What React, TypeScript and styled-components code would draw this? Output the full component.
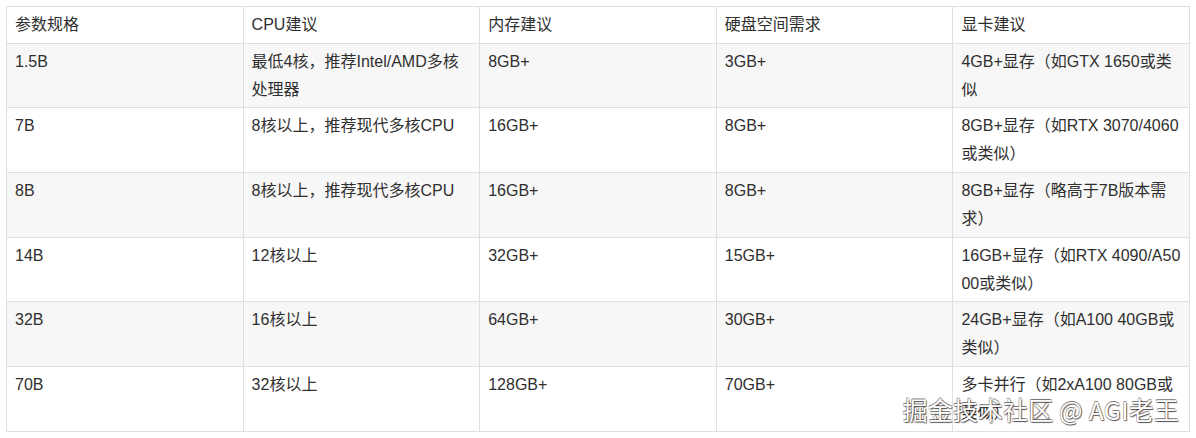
import React from "react";
import styled, { createGlobalStyle } from "styled-components";

const Global = createGlobalStyle`
  html, body { margin: 0; padding: 0; background: #fff; }
  body { font-family: "Liberation Sans", "Noto Sans CJK SC", sans-serif; }
`;

const Page = styled.div`
  position: relative;
  width: 1196px;
  height: 438px;
  overflow: hidden;
  padding: 6px 0 0 6px;
  box-sizing: border-box;
`;

const Table = styled.table`
  width: 1184px;
  table-layout: fixed;
  border-collapse: collapse;
  font-size: 16px;
  line-height: 28px;
  color: #2f2f2f;
`;

const Row = styled.tr<{ $shaded?: boolean }>`
  background: ${(p) => (p.$shaded ? "#f7f7f7" : "#fff")};
`;

const HeadCell = styled.th`
  border: 1px solid #dfdfdf;
  padding: 3.85px 8px;
  text-align: left;
  font-weight: normal;
  vertical-align: top;
`;

const Cell = styled.td`
  border: 1px solid #dfdfdf;
  padding: 3.85px 8px;
  text-align: left;
  vertical-align: top;
  word-break: break-all;
`;

const Watermark = styled.div`
  position: absolute;
  right: 17px;
  top: 394px;
  font-family: "Noto Sans CJK SC", sans-serif;
  font-size: 24.8px;
  line-height: 30px;
  color: #fff;
  letter-spacing: 0.3px;
  text-shadow: 1px 1px 1px rgba(0, 0, 0, 0.6), -0.6px -0.6px 0 rgba(0, 0, 0, 0.4),
    0.6px -0.6px 0 rgba(0, 0, 0, 0.25), -0.6px 0.6px 0 rgba(0, 0, 0, 0.25);
  white-space: nowrap;
  pointer-events: none;
`;

const headers = ["参数规格", "CPU建议", "内存建议", "硬盘空间需求", "显卡建议"];

const rows: string[][] = [
  ["1.5B", "最低4核，推荐Intel/AMD多核处理器", "8GB+", "3GB+", "4GB+显存（如GTX 1650或类似"],
  ["7B", "8核以上，推荐现代多核CPU", "16GB+", "8GB+", "8GB+显存（如RTX 3070/4060或类似）"],
  ["8B", "8核以上，推荐现代多核CPU", "16GB+", "8GB+", "8GB+显存（略高于7B版本需求）"],
  ["14B", "12核以上", "32GB+", "15GB+", "16GB+显存（如RTX 4090/A5000或类似）"],
  ["32B", "16核以上", "64GB+", "30GB+", "24GB+显存（如A100 40GB或类似）"],
  ["70B", "32核以上", "128GB+", "70GB+", "多卡并行（如2xA100 80GB或类似）"],
];

export default function App() {
  return (
    <>
      <Global />
      <Page>
        <Table>
          <thead>
            <Row>
              {headers.map((h) => (
                <HeadCell key={h}>{h}</HeadCell>
              ))}
            </Row>
          </thead>
          <tbody>
            {rows.map((r, i) => (
              <Row key={r[0]} $shaded={i % 2 === 0}>
                {r.map((c, j) => (
                  <Cell key={j}>{c}</Cell>
                ))}
              </Row>
            ))}
          </tbody>
        </Table>
        <Watermark>掘金技术社区 @ AGI老王</Watermark>
      </Page>
    </>
  );
}
